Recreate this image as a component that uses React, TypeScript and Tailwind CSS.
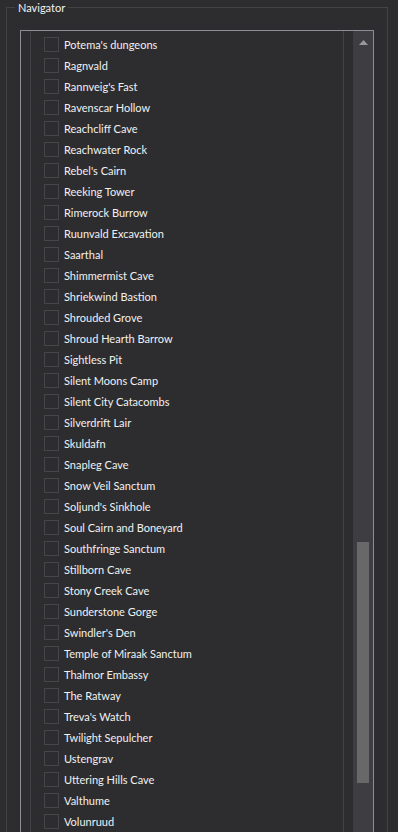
import React from "react";

const items = [
  "Potema's dungeons",
  "Ragnvald",
  "Rannveig's Fast",
  "Ravenscar Hollow",
  "Reachcliff Cave",
  "Reachwater Rock",
  "Rebel's Cairn",
  "Reeking Tower",
  "Rimerock Burrow",
  "Ruunvald Excavation",
  "Saarthal",
  "Shimmermist Cave",
  "Shriekwind Bastion",
  "Shrouded Grove",
  "Shroud Hearth Barrow",
  "Sightless Pit",
  "Silent Moons Camp",
  "Silent City Catacombs",
  "Silverdrift Lair",
  "Skuldafn",
  "Snapleg Cave",
  "Snow Veil Sanctum",
  "Soljund's Sinkhole",
  "Soul Cairn and Boneyard",
  "Southfringe Sanctum",
  "Stillborn Cave",
  "Stony Creek Cave",
  "Sunderstone Gorge",
  "Swindler's Den",
  "Temple of Miraak Sanctum",
  "Thalmor Embassy",
  "The Ratway",
  "Treva's Watch",
  "Twilight Sepulcher",
  "Ustengrav",
  "Uttering Hills Cave",
  "Valthume",
  "Volunruud",
];

export default function App() {
  return (
    <div
      className="h-[832px] w-[398px] overflow-hidden bg-[#2d2d30] pt-[7px] pl-[6px] text-[11px] text-[#f1f1f1]"
      style={{ fontFamily: 'Lato, "Noto Sans", sans-serif' }}
    >
      <div className="relative h-[900px] w-[382px] border-l border-t border-r border-[#434346] pl-[13px] pt-[22px]">
        <div className="absolute left-[8px] top-[-8px] bg-[#2d2d30] px-[3px] leading-[16px]">
          Navigator
        </div>
        <div className="flex h-[900px] w-[354px] border border-[#8d8e93] pl-[9px]">
          <div className="w-[314px] border-x border-[#434346] pt-[3px] pl-[13px]">
            {items.map((name) => (
              <div key={name} className="flex h-[21px] items-center">
                <div className="h-[15px] w-[15px] border border-[#46464a]" />
                <span className="ml-[5px] pt-[1px] leading-[16px]">{name}</span>
              </div>
            ))}
          </div>
          <div className="w-[9px]" />
          <div className="flex w-[20px] flex-col items-center bg-[#3e3e42]">
            <svg width="9" height="5" viewBox="0 0 9 5" className="mt-[9px]">
              <polygon points="4.5,0 9,5 0,5" fill="#999999" />
            </svg>
            <div className="mt-[497px] h-[241px] w-[12px] bg-[#686868]" />
          </div>
        </div>
      </div>
    </div>
  );
}
